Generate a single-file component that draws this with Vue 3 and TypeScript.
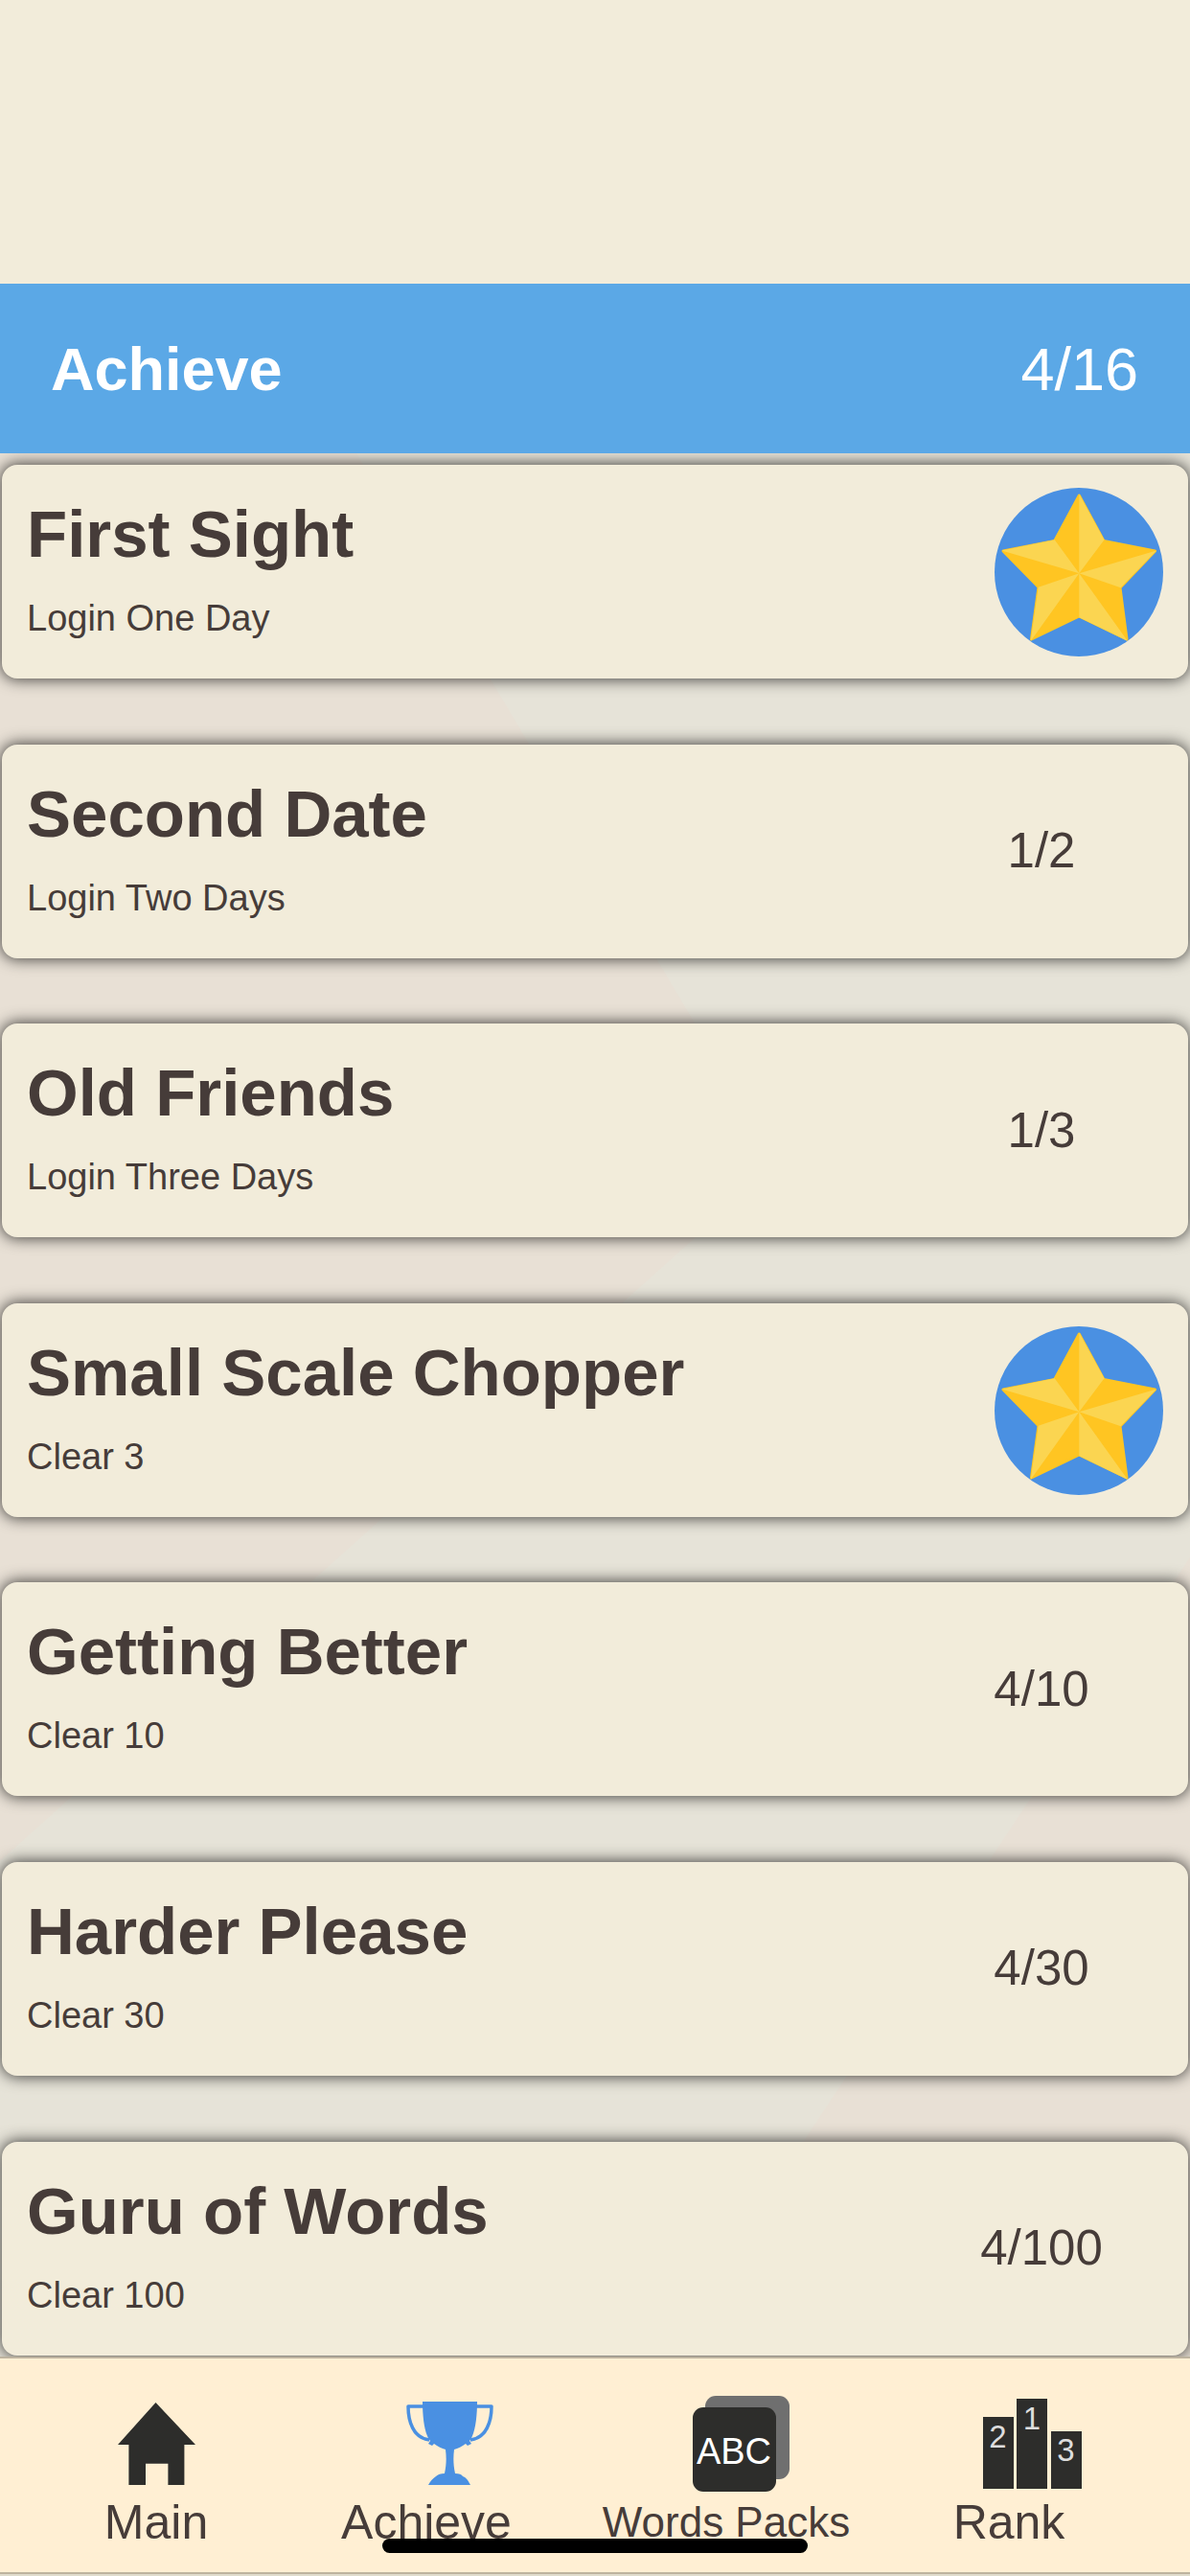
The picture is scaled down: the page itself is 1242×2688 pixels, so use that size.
<script setup lang="ts">
interface Achievement {
  title: string
  desc: string
  progress?: string
}

const items: Achievement[] = [
  { title: 'First Sight', desc: 'Login One Day' },
  { title: 'Second Date', desc: 'Login Two Days', progress: '1/2' },
  { title: 'Old Friends', desc: 'Login Three Days', progress: '1/3' },
  { title: 'Small Scale Chopper', desc: 'Clear 3' },
  { title: 'Getting Better', desc: 'Clear 10', progress: '4/10' },
  { title: 'Harder Please', desc: 'Clear 30', progress: '4/30' },
  { title: 'Guru of Words', desc: 'Clear 100', progress: '4/100' },
]
</script>

<template>
  <div class="screen">
    <div class="top-space"></div>
    <header class="head">
      <span class="head-title">Achieve</span>
      <span class="head-count">4/16</span>
    </header>
    <main class="list">
      <article v-for="item in items" :key="item.title" class="card">
        <div class="card-text">
          <h2 class="card-title">{{ item.title }}</h2>
          <p class="card-desc">{{ item.desc }}</p>
        </div>
        <span v-if="item.progress" class="progress">{{ item.progress }}</span>
        <svg v-else class="star" viewBox="0 0 176 176" aria-hidden="true">
          <circle cx="88" cy="88" r="88" fill="#4a90e2" />
          <path fill="#ffc522" stroke="#ffc522" stroke-width="3" stroke-linejoin="round" d="M88.3 8 L114 55.5 L167.5 66 L131 104.3 L138 158 L88.3 134 L38.5 158 L46 103.7 L9 66 L62.7 55.5 Z" />
          <path fill="#fbd551" d="M88.3 89.3 L88.3 6.5 L114.5 54.3 Z M88.3 89.3 L169 65.5 L131.7 104.3 Z M88.3 89.3 L139 160 L88.3 135.3 Z M88.3 89.3 L37.7 160 L45.7 103.7 Z M88.3 89.3 L7.5 65.5 L62.7 54.3 Z" />
        </svg>
      </article>
    </main>
    <nav class="tabs">
      <div class="tab tab-main">
        <svg class="icon icon-home" width="81" height="86" viewBox="0 0 81 86" aria-hidden="true">
          <path fill="#2d2d2b" d="M39.5 0 L81 44 L69.4 44 L69.4 86 L52.4 86 L52.4 63.7 L29 63.7 L29 86 L11.4 86 L11.4 44 L0 44 Z" />
        </svg>
        <span class="tab-label">Main</span>
      </div>
      <div class="tab tab-achieve">
        <svg class="icon icon-cup" width="91" height="87" viewBox="0 0 91 87" aria-hidden="true">
          <path fill="none" stroke="#4a90e2" stroke-width="3.5" stroke-linejoin="round" d="M18 5 H2 C2 20 7 38 24 40 M73 5 H89 C89 20 84 38 67 40" />
          <path fill="#4a90e2" d="M17 0 H74 C74 16 72 34 66 41 L68 44 L64 46 L62 44 C58 47 54 49 50 50 C49 58 49 66 51 75 C55 75 58 76 59 78 C62 79 64 81 67 87 H23 C25 83 28 80 31 78 C33 76 36 75 40 75 C42 66 42 58 41 50 C37 49 33 47 29 44 L27 46 L23 44 L25 41 C19 34 17 16 17 0 Z" />
        </svg>
        <span class="tab-label">Achieve</span>
      </div>
      <div class="tab tab-words">
        <div class="icon pack">
          <div class="pack-back"></div>
          <div class="pack-front">ABC</div>
        </div>
        <span class="tab-label words">Words Packs</span>
      </div>
      <div class="tab tab-rank">
        <div class="icon podium">
          <div class="step step-2">2</div>
          <div class="step step-1">1</div>
          <div class="step step-3">3</div>
        </div>
        <span class="tab-label">Rank</span>
      </div>
    </nav>
    <div class="bottom-strip"></div>
    <div class="home-indicator"></div>
  </div>
</template>

<style scoped>
.screen {
  position: relative;
  width: 1242px;
  height: 2688px;
  overflow: hidden;
  display: flex;
  flex-direction: column;
  font-family: "Liberation Sans", Arial, sans-serif;
  color: #463c39;
}
.top-space {
  height: 296px;
  flex: none;
  background: #f2ecda;
}
.head {
  height: 177px;
  flex: none;
  display: flex;
  align-items: center;
  justify-content: space-between;
  padding: 0 54px 0 53px;
  background: #5ba8e6;
  color: #fff;
  position: relative;
  z-index: 1;
}
.head-title {
  font-size: 63px;
  font-weight: 700;
}
.head-count {
  font-size: 63px;
}
.list {
  position: relative;
  height: 1986px;
  flex: none;
  overflow: hidden;
  padding: 12px 2px 0;
  box-sizing: border-box;
  display: flex;
  flex-direction: column;
  gap: 68.6px;
  background: #e6e3d8;
}
.list::before,
.list::after {
  content: "";
  position: absolute;
  inset: 0;
  background: #e8e0d5;
}
.list::before {
  clip-path: polygon(0 0, 372px 0, 812px 741px, 0 1469px);
}
.list::after {
  clip-path: polygon(1242px 1152px, 690px 1986px, 1242px 1986px);
}
.card {
  position: relative;
  z-index: 1;
  flex: none;
  height: 223px;
  box-sizing: border-box;
  display: flex;
  justify-content: space-between;
  background: #f2ecda;
  border-radius: 16px;
  box-shadow: 0 0 16px 1px rgba(0, 0, 0, 0.72);
}
.card-text {
  padding: 34px 0 0 26px;
}
.card-title {
  margin: 0;
  font-size: 69px;
  line-height: 78px;
  font-weight: 700;
}
.card-desc {
  margin: 26px 0 0;
  font-size: 38px;
  line-height: 44px;
}
.star {
  width: 176px;
  height: 176px;
  display: block;
  flex: none;
  margin: 24px 26px 0 0;
}
.progress {
  flex: none;
  align-self: center;
  width: 200px;
  margin-right: 53px;
  font-size: 51px;
  line-height: 60px;
  text-align: center;
}
.tabs {
  height: 227px;
  flex: none;
  box-sizing: border-box;
  padding: 39px 88px 0 0;
  display: grid;
  grid-template-columns: 326px 238px 388px 202px;
  background: #ffefd3;
  border-top: 2px solid #bdb39f;
  border-bottom: 2px solid #bdb39f;
  position: relative;
  z-index: 1;
}
.tab {
  display: flex;
  flex-direction: column;
  align-items: center;
  height: 156px;
  position: relative;
}
.icon {
  flex: none;
  display: block;
}
.icon-home {
  margin: 7px 0 7px 1px;
}
.icon-cup {
  margin: 6px 0 7px 48px;
}
.pack {
  width: 101px;
  height: 100px;
  margin-left: 30px;
  position: relative;
}
.pack-back {
  position: absolute;
  left: 13px;
  top: 0;
  width: 88px;
  height: 87px;
  border-radius: 11px;
  background: #6f6f6f;
}
.pack-front {
  position: absolute;
  left: 0;
  top: 12px;
  width: 87px;
  height: 88px;
  border-radius: 11px;
  background: #2d2d2b;
  color: #fff;
  font-size: 38px;
  line-height: 92px;
  text-align: center;
}
.podium {
  width: 103px;
  height: 94px;
  margin: 3px 0 3px 48px;
  display: flex;
  justify-content: space-between;
  align-items: flex-end;
}
.step {
  width: 32px;
  box-sizing: border-box;
  background: #2d2d2b;
  color: #ddd;
  font-size: 33px;
  line-height: 36px;
  text-align: center;
}
.step-1 {
  height: 94px;
  padding-top: 3px;
}
.step-2 {
  height: 75px;
  padding-top: 3px;
}
.step-3 {
  height: 60px;
  padding-top: 2px;
}
.tab-label {
  margin-top: 4px;
  font-size: 50px;
  line-height: 56px;
  white-space: nowrap;
}
.tab-label.words {
  font-size: 44px;
}
.bottom-strip {
  height: 2px;
  flex: none;
  background: #e0dccd;
}
.home-indicator {
  position: absolute;
  left: 399px;
  top: 2649px;
  width: 444px;
  height: 15px;
  border-radius: 8px;
  background: #000;
  z-index: 2;
}
</style>
